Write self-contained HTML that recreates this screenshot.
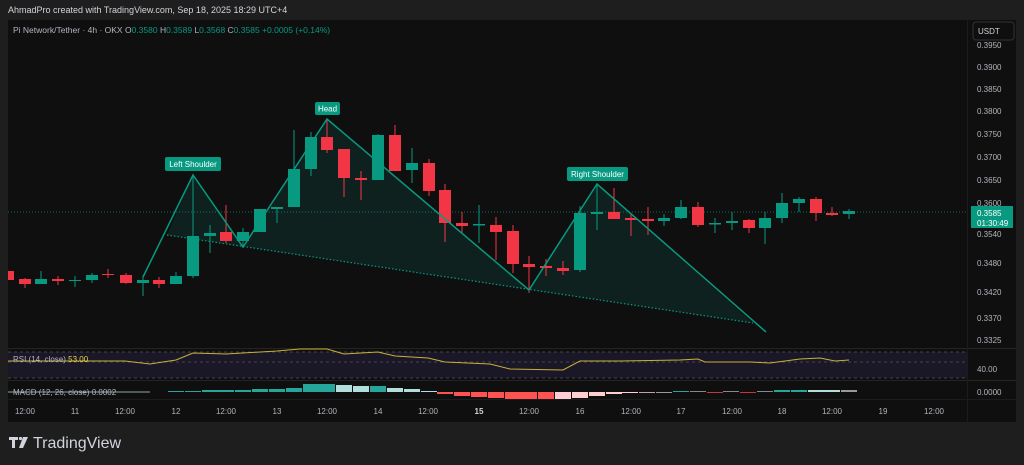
<!DOCTYPE html>
<html><head><meta charset="utf-8"><style>
html,body{margin:0;padding:0;background:#1e1e1e;width:1024px;height:465px;overflow:hidden;font-family:"Liberation Sans",sans-serif}
svg{display:block}
</style></head><body>
<svg width="1024" height="465" viewBox="0 0 1024 465" font-family="Liberation Sans, sans-serif">
<rect width="1024" height="465" fill="#1e1e1e"/>
<text x="8" y="13" font-size="9" fill="#d1d4dc">AhmadPro created with TradingView.com, Sep 18, 2025 18:29 UTC+4</text>
<rect x="8" y="20" width="1008" height="402" fill="#0f0f0f"/>
<line x1="8" y1="348.5" x2="1016" y2="348.5" stroke="#242424"/>
<line x1="8" y1="380.5" x2="1016" y2="380.5" stroke="#242424"/>
<line x1="8" y1="399.5" x2="1016" y2="399.5" stroke="#1c1c1c"/>
<line x1="967.5" y1="20" x2="967.5" y2="422" stroke="#1c1c1c"/>
<text x="13" y="33" font-size="8.5" fill="#b2b5be">Pi Network/Tether · 4h · OKX  <tspan>O</tspan><tspan fill="#089981">0.3580</tspan>  H<tspan fill="#089981">0.3589</tspan>  L<tspan fill="#089981">0.3568</tspan>  C<tspan fill="#089981">0.3585</tspan>  <tspan fill="#089981">+0.0005 (+0.14%)</tspan></text>
<line x1="8" y1="212" x2="967" y2="212" stroke="#089981" stroke-dasharray="1 2" opacity="0.7"/>
<polygon points="167,235 193,175 243,247 327,119 529,290 597,184 753,323" fill="#089981" fill-opacity="0.13"/>
<line x1="167" y1="235" x2="753" y2="323" stroke="#089981" stroke-dasharray="1.5 2" stroke-width="1.2"/>
<rect x="8" y="271" width="6" height="9" fill="#f23645"/>
<g stroke-width="1">
<g fill="#f23645" stroke="#f23645">
<line x1="25" y1="278" x2="25" y2="288"/><rect x="19" y="279" width="12" height="5" stroke="none"/>
<line x1="58" y1="276" x2="58" y2="285"/><rect x="52" y="279" width="12" height="2" stroke="none"/>
<line x1="108" y1="269" x2="108" y2="278"/><rect x="102" y="274" width="12" height="1" stroke="none"/>
<line x1="126" y1="273" x2="126" y2="284"/><rect x="120" y="275" width="12" height="8" stroke="none"/>
<line x1="159" y1="277" x2="159" y2="288"/><rect x="153" y="280" width="12" height="4" stroke="none"/>
<line x1="226" y1="205" x2="226" y2="243"/><rect x="220" y="232" width="12" height="9" stroke="none"/>
<line x1="327" y1="119" x2="327" y2="153"/><rect x="321" y="137" width="12" height="13" stroke="none"/>
<line x1="344" y1="149" x2="344" y2="197"/><rect x="338" y="149" width="12" height="29" stroke="none"/>
<line x1="361" y1="171" x2="361" y2="200"/><rect x="355" y="178" width="12" height="2" stroke="none"/>
<line x1="395" y1="125" x2="395" y2="171"/><rect x="389" y="135" width="12" height="36" stroke="none"/>
<line x1="429" y1="159" x2="429" y2="196"/><rect x="423" y="163" width="12" height="28" stroke="none"/>
<line x1="445" y1="184" x2="445" y2="242"/><rect x="439" y="190" width="12" height="33" stroke="none"/>
<line x1="462" y1="212" x2="462" y2="233"/><rect x="456" y="223" width="12" height="3" stroke="none"/>
<line x1="496" y1="217" x2="496" y2="260"/><rect x="490" y="225" width="12" height="7" stroke="none"/>
<line x1="513" y1="225" x2="513" y2="273"/><rect x="507" y="231" width="12" height="33" stroke="none"/>
<line x1="529" y1="256" x2="529" y2="293"/><rect x="523" y="264" width="12" height="3" stroke="none"/>
<line x1="546" y1="259" x2="546" y2="276"/><rect x="540" y="266" width="12" height="2" stroke="none"/>
<line x1="563" y1="261" x2="563" y2="275"/><rect x="557" y="268" width="12" height="3" stroke="none"/>
<line x1="614" y1="188" x2="614" y2="219"/><rect x="608" y="212" width="12" height="7" stroke="none"/>
<line x1="631" y1="213" x2="631" y2="236"/><rect x="625" y="218" width="12" height="2" stroke="none"/>
<line x1="648" y1="207" x2="648" y2="235"/><rect x="642" y="219" width="12" height="2" stroke="none"/>
<line x1="698" y1="202" x2="698" y2="227"/><rect x="692" y="207" width="12" height="18" stroke="none"/>
<line x1="749" y1="219" x2="749" y2="233"/><rect x="743" y="220" width="12" height="8" stroke="none"/>
<line x1="816" y1="197" x2="816" y2="221"/><rect x="810" y="199" width="12" height="14" stroke="none"/>
<line x1="832" y1="207" x2="832" y2="216"/><rect x="826" y="213" width="12" height="2" stroke="none"/>
</g>
<g fill="#089981" stroke="#089981">
<line x1="41" y1="271" x2="41" y2="284"/><rect x="35" y="279" width="12" height="5" stroke="none"/>
<line x1="75" y1="276" x2="75" y2="287"/><rect x="69" y="280" width="12" height="1" stroke="none"/>
<line x1="92" y1="273" x2="92" y2="283"/><rect x="86" y="275" width="12" height="5" stroke="none"/>
<line x1="143" y1="276" x2="143" y2="296"/><rect x="137" y="280" width="12" height="3" stroke="none"/>
<line x1="176" y1="272" x2="176" y2="284"/><rect x="170" y="276" width="12" height="8" stroke="none"/>
<line x1="193" y1="174" x2="193" y2="278"/><rect x="187" y="236" width="12" height="40" stroke="none"/>
<line x1="210" y1="225" x2="210" y2="253"/><rect x="204" y="233" width="12" height="3" stroke="none"/>
<line x1="243" y1="228" x2="243" y2="248"/><rect x="237" y="232" width="12" height="9" stroke="none"/>
<line x1="260" y1="209" x2="260" y2="232"/><rect x="254" y="209" width="12" height="23" stroke="none"/>
<line x1="277" y1="207" x2="277" y2="223"/><rect x="271" y="207" width="12" height="2" stroke="none"/>
<line x1="294" y1="130" x2="294" y2="207"/><rect x="288" y="169" width="12" height="38" stroke="none"/>
<line x1="311" y1="132" x2="311" y2="176"/><rect x="305" y="137" width="12" height="32" stroke="none"/>
<line x1="378" y1="134" x2="378" y2="180"/><rect x="372" y="135" width="12" height="45" stroke="none"/>
<line x1="412" y1="148" x2="412" y2="183"/><rect x="406" y="163" width="12" height="7" stroke="none"/>
<line x1="479" y1="205" x2="479" y2="243"/><rect x="473" y="224" width="12" height="1.5" stroke="none"/>
<line x1="580" y1="206" x2="580" y2="272"/><rect x="574" y="213" width="12" height="57" stroke="none"/>
<line x1="597" y1="184" x2="597" y2="230"/><rect x="591" y="212" width="12" height="2" stroke="none"/>
<line x1="664" y1="214" x2="664" y2="226"/><rect x="658" y="218" width="12" height="3" stroke="none"/>
<line x1="681" y1="200" x2="681" y2="219"/><rect x="675" y="207" width="12" height="11" stroke="none"/>
<line x1="715" y1="218" x2="715" y2="233"/><rect x="709" y="223" width="12" height="1.5" stroke="none"/>
<line x1="732" y1="212" x2="732" y2="230"/><rect x="726" y="221" width="12" height="2" stroke="none"/>
<line x1="765" y1="212" x2="765" y2="244"/><rect x="759" y="218" width="12" height="10" stroke="none"/>
<line x1="782" y1="193" x2="782" y2="223"/><rect x="776" y="203" width="12" height="15" stroke="none"/>
<line x1="799" y1="197" x2="799" y2="212"/><rect x="793" y="199" width="12" height="4" stroke="none"/>
<line x1="849" y1="209" x2="849" y2="219"/><rect x="843" y="211" width="12" height="3" stroke="none"/>
</g>
</g>
<polyline points="143,277 193,175 243,247 327,119 529,290 597,184 766,332" fill="none" stroke="#089981" stroke-width="1.5"/>
<g font-size="8" fill="#fff" text-anchor="middle">
<rect x="165" y="157" width="56" height="14" rx="2" fill="#089981"/><text x="193" y="167">Left Shoulder</text>
<rect x="315" y="102" width="25" height="13" rx="2" fill="#089981"/><text x="327.5" y="111.5">Head</text>
<rect x="567" y="167" width="61" height="14" rx="2" fill="#089981"/><text x="597.5" y="177">Right Shoulder</text>
</g>
<rect x="973" y="22" width="41" height="18" rx="3" fill="#0f0f0f" stroke="#333"/>
<text x="978" y="34" font-size="8" fill="#d1d4dc">USDT</text>
<g font-size="8" fill="#b2b5be">
<text x="977" y="48">0.3950</text><text x="977" y="70">0.3900</text><text x="977" y="92">0.3850</text>
<text x="977" y="114">0.3800</text><text x="977" y="137">0.3750</text><text x="977" y="160">0.3700</text>
<text x="977" y="183">0.3650</text><text x="977" y="206">0.3600</text><text x="977" y="237">0.3540</text>
<text x="977" y="266">0.3480</text><text x="977" y="295">0.3420</text><text x="977" y="321">0.3370</text>
<text x="977" y="343">0.3325</text><text x="977" y="372">40.00</text><text x="977" y="395">0.0000</text>
</g>
<rect x="971" y="206" width="42" height="22" fill="#089981"/>
<text x="977" y="216" font-size="8" fill="#fff">0.3585</text>
<text x="977" y="226" font-size="8" fill="#fff">01:30:49</text>
<rect x="8" y="352" width="959" height="26" fill="#1a1726"/>
<g stroke="#555" stroke-dasharray="3 3" stroke-width="0.8">
<line x1="8" y1="352" x2="967" y2="352"/><line x1="8" y1="362" x2="967" y2="362"/><line x1="8" y1="378" x2="967" y2="378"/>
</g>
<polyline points="8,361 125,361 150,364 176,360 193,353 226,354 277,351 300,349 327,349 344,354 378,352 395,356 428,358 445,362 490,364 510,369 563,370 580,361 620,361 680,360 698,359 705,362 750,362 770,363 800,359 820,358 835,361 849,360" fill="none" stroke="#c9b13a" stroke-width="1"/>
<text x="13" y="362" font-size="8" fill="#b2b5be">RSI (14, close) <tspan fill="#e8d24a">53.00</tspan></text>
<g>
<rect x="168" y="391" width="16" height="1" fill="#26a69a"/>
<rect x="185" y="391" width="16" height="1" fill="#26a69a"/>
<rect x="202" y="390" width="16" height="2" fill="#26a69a"/>
<rect x="218" y="390" width="16" height="2" fill="#26a69a"/>
<rect x="235" y="390" width="16" height="2" fill="#26a69a"/>
<rect x="252" y="389" width="16" height="3" fill="#26a69a"/>
<rect x="269" y="389" width="16" height="3" fill="#26a69a"/>
<rect x="286" y="388" width="16" height="4" fill="#26a69a"/>
<rect x="303" y="384" width="16" height="8" fill="#26a69a"/>
<rect x="319" y="384" width="16" height="8" fill="#26a69a"/>
<rect x="336" y="385" width="16" height="7" fill="#b2dfdb"/>
<rect x="353" y="386" width="16" height="6" fill="#b2dfdb"/>
<rect x="370" y="386" width="16" height="6" fill="#26a69a"/>
<rect x="387" y="388" width="16" height="4" fill="#b2dfdb"/>
<rect x="404" y="389" width="16" height="3" fill="#b2dfdb"/>
<rect x="421" y="391" width="16" height="1" fill="#b2dfdb"/>
<rect x="437" y="392" width="16" height="2" fill="#ff5252"/>
<rect x="454" y="392" width="16" height="4" fill="#ff5252"/>
<rect x="471" y="392" width="16" height="5" fill="#ff5252"/>
<rect x="488" y="392" width="16" height="6" fill="#ff5252"/>
<rect x="505" y="392" width="16" height="7" fill="#ff5252"/>
<rect x="521" y="392" width="16" height="7" fill="#ff5252"/>
<rect x="538" y="392" width="16" height="7" fill="#ff5252"/>
<rect x="555" y="392" width="16" height="7" fill="#ffcdd2"/>
<rect x="572" y="392" width="16" height="6" fill="#ffcdd2"/>
<rect x="589" y="392" width="16" height="4" fill="#ffcdd2"/>
<rect x="606" y="392" width="16" height="2" fill="#ffcdd2"/>
<rect x="622" y="392" width="16" height="1" fill="#ffcdd2"/>
<rect x="639" y="392" width="16" height="1" fill="#c8a0a4"/>
<rect x="656" y="392" width="16" height="1" fill="#999"/>
<rect x="673" y="391" width="16" height="1" fill="#26a69a"/>
<rect x="690" y="391" width="16" height="1" fill="#888"/>
<rect x="707" y="392" width="16" height="1" fill="#c33"/>
<rect x="723" y="391" width="16" height="1" fill="#888"/>
<rect x="740" y="392" width="16" height="1" fill="#c33"/>
<rect x="757" y="391" width="16" height="1" fill="#888"/>
<rect x="774" y="390" width="16" height="2" fill="#26a69a"/>
<rect x="791" y="390" width="16" height="2" fill="#26a69a"/>
<rect x="808" y="390" width="16" height="2" fill="#b2dfdb"/>
<rect x="824" y="390" width="16" height="2" fill="#b2dfdb"/>
<rect x="841" y="390" width="16" height="2" fill="#999"/>
</g>
<line x1="8" y1="392" x2="150" y2="392" stroke="#b2dfdb" stroke-width="0.8"/>
<text x="13" y="395" font-size="8" fill="#b2b5be">MACD (12, 26, close) <tspan>0.0002</tspan></text>
<g font-size="8" fill="#b2b5be" text-anchor="middle">
<text x="25" y="414">12:00</text><text x="75" y="414">11</text><text x="125" y="414">12:00</text>
<text x="176" y="414">12</text><text x="226" y="414">12:00</text><text x="277" y="414">13</text>
<text x="327" y="414">12:00</text><text x="378" y="414">14</text><text x="428" y="414">12:00</text>
<text x="479" y="414" font-weight="bold" fill="#d1d4dc">15</text><text x="529" y="414">12:00</text><text x="580" y="414">16</text>
<text x="631" y="414">12:00</text><text x="681" y="414">17</text><text x="732" y="414">12:00</text>
<text x="782" y="414">18</text><text x="832" y="414">12:00</text><text x="883" y="414">19</text><text x="934" y="414">12:00</text>
</g>
<g fill="#d1d4dc">
<path d="M9 437h9v3h-3v8h-3v-8h-3z"/>
<circle cx="20.5" cy="438.5" r="1.6"/>
<path d="M23 437h5l-5 11h-4z"/>
</g>
<text x="33" y="448" font-size="16" fill="#d1d4dc">TradingView</text>
</svg>
</body></html>
